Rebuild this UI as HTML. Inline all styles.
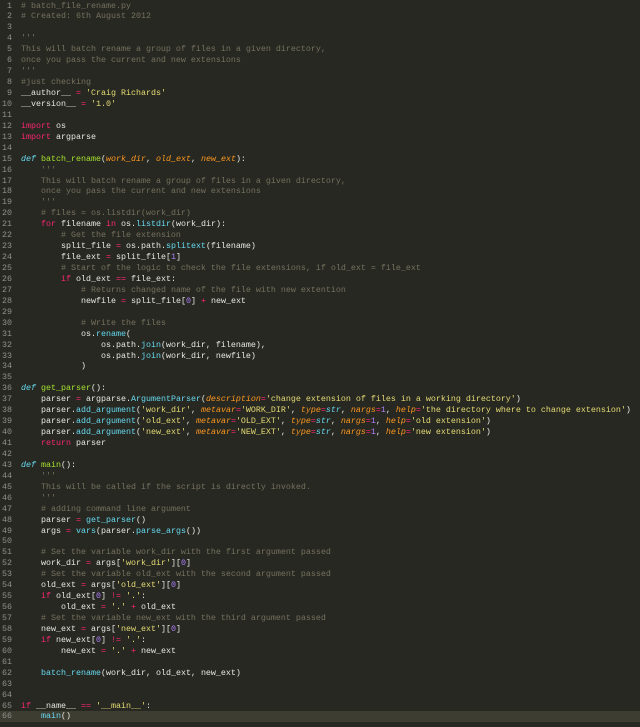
<!DOCTYPE html>
<html><head><meta charset="utf-8"><style>
html,body{margin:0;padding:0;background:#272822;width:640px;height:727px;overflow:hidden}
.w{position:relative;padding-top:0.5px;font-family:"Liberation Mono",monospace;font-size:8.33px;line-height:10.95px;color:#e8e8e2}
.l{display:block;height:10.95px;white-space:pre}
.g{display:inline-block;width:12px;text-align:right;color:#8f908a;margin-right:9px}
.c{color:#75715e}.s{color:#e6db74}.k{color:#f92672}.f{color:#a6e22e}.p{color:#fd971f;font-style:italic}
.d{color:#66d9ef;font-style:italic}.n{color:#ae81ff}.b{color:#66d9ef}
.cur{background:#3e3d32}
</style></head><body><div class="w">
<span class="l"><span class="g">1</span><span class="c"># batch_file_rename.py</span></span>
<span class="l"><span class="g">2</span><span class="c"># Created: 6th August 2012</span></span>
<span class="l"><span class="g">3</span></span>
<span class="l"><span class="g">4</span><span class="c">'''</span></span>
<span class="l"><span class="g">5</span><span class="c">This will batch rename a group of files in a given directory,</span></span>
<span class="l"><span class="g">6</span><span class="c">once you pass the current and new extensions</span></span>
<span class="l"><span class="g">7</span><span class="c">'''</span></span>
<span class="l"><span class="g">8</span><span class="c">#just checking</span></span>
<span class="l"><span class="g">9</span>__author__ <span class="k">=</span> <span class="s">'Craig Richards'</span></span>
<span class="l"><span class="g">10</span>__version__ <span class="k">=</span> <span class="s">'1.0'</span></span>
<span class="l"><span class="g">11</span></span>
<span class="l"><span class="g">12</span><span class="k">import</span> os</span>
<span class="l"><span class="g">13</span><span class="k">import</span> argparse</span>
<span class="l"><span class="g">14</span></span>
<span class="l"><span class="g">15</span><span class="d">def</span> <span class="f">batch_rename</span>(<span class="p">work_dir</span>, <span class="p">old_ext</span>, <span class="p">new_ext</span>):</span>
<span class="l"><span class="g">16</span>    <span class="c">'''</span></span>
<span class="l"><span class="g">17</span>    <span class="c">This will batch rename a group of files in a given directory,</span></span>
<span class="l"><span class="g">18</span>    <span class="c">once you pass the current and new extensions</span></span>
<span class="l"><span class="g">19</span>    <span class="c">'''</span></span>
<span class="l"><span class="g">20</span>    <span class="c"># files = os.listdir(work_dir)</span></span>
<span class="l"><span class="g">21</span>    <span class="k">for</span> filename <span class="k">in</span> os.<span class="b">listdir</span>(work_dir):</span>
<span class="l"><span class="g">22</span>        <span class="c"># Get the file extension</span></span>
<span class="l"><span class="g">23</span>        split_file <span class="k">=</span> os.path.<span class="b">splitext</span>(filename)</span>
<span class="l"><span class="g">24</span>        file_ext <span class="k">=</span> split_file[<span class="n">1</span>]</span>
<span class="l"><span class="g">25</span>        <span class="c"># Start of the logic to check the file extensions, if old_ext = file_ext</span></span>
<span class="l"><span class="g">26</span>        <span class="k">if</span> old_ext <span class="k">==</span> file_ext:</span>
<span class="l"><span class="g">27</span>            <span class="c"># Returns changed name of the file with new extention</span></span>
<span class="l"><span class="g">28</span>            newfile <span class="k">=</span> split_file[<span class="n">0</span>] <span class="k">+</span> new_ext</span>
<span class="l"><span class="g">29</span></span>
<span class="l"><span class="g">30</span>            <span class="c"># Write the files</span></span>
<span class="l"><span class="g">31</span>            os.<span class="b">rename</span>(</span>
<span class="l"><span class="g">32</span>                os.path.<span class="b">join</span>(work_dir, filename),</span>
<span class="l"><span class="g">33</span>                os.path.<span class="b">join</span>(work_dir, newfile)</span>
<span class="l"><span class="g">34</span>            )</span>
<span class="l"><span class="g">35</span></span>
<span class="l"><span class="g">36</span><span class="d">def</span> <span class="f">get_parser</span>():</span>
<span class="l"><span class="g">37</span>    parser <span class="k">=</span> argparse.<span class="b">ArgumentParser</span>(<span class="p">description</span><span class="k">=</span><span class="s">'change extension of files in a working directory'</span>)</span>
<span class="l"><span class="g">38</span>    parser.<span class="b">add_argument</span>(<span class="s">'work_dir'</span>, <span class="p">metavar</span><span class="k">=</span><span class="s">'WORK_DIR'</span>, <span class="p">type</span><span class="k">=</span><span class="d">str</span>, <span class="p">nargs</span><span class="k">=</span><span class="n">1</span>, <span class="p">help</span><span class="k">=</span><span class="s">'the directory where to change extension'</span>)</span>
<span class="l"><span class="g">39</span>    parser.<span class="b">add_argument</span>(<span class="s">'old_ext'</span>, <span class="p">metavar</span><span class="k">=</span><span class="s">'OLD_EXT'</span>, <span class="p">type</span><span class="k">=</span><span class="d">str</span>, <span class="p">nargs</span><span class="k">=</span><span class="n">1</span>, <span class="p">help</span><span class="k">=</span><span class="s">'old extension'</span>)</span>
<span class="l"><span class="g">40</span>    parser.<span class="b">add_argument</span>(<span class="s">'new_ext'</span>, <span class="p">metavar</span><span class="k">=</span><span class="s">'NEW_EXT'</span>, <span class="p">type</span><span class="k">=</span><span class="d">str</span>, <span class="p">nargs</span><span class="k">=</span><span class="n">1</span>, <span class="p">help</span><span class="k">=</span><span class="s">'new extension'</span>)</span>
<span class="l"><span class="g">41</span>    <span class="k">return</span> parser</span>
<span class="l"><span class="g">42</span></span>
<span class="l"><span class="g">43</span><span class="d">def</span> <span class="f">main</span>():</span>
<span class="l"><span class="g">44</span>    <span class="c">'''</span></span>
<span class="l"><span class="g">45</span>    <span class="c">This will be called if the script is directly invoked.</span></span>
<span class="l"><span class="g">46</span>    <span class="c">'''</span></span>
<span class="l"><span class="g">47</span>    <span class="c"># adding command line argument</span></span>
<span class="l"><span class="g">48</span>    parser <span class="k">=</span> <span class="b">get_parser</span>()</span>
<span class="l"><span class="g">49</span>    args <span class="k">=</span> <span class="b">vars</span>(parser.<span class="b">parse_args</span>())</span>
<span class="l"><span class="g">50</span></span>
<span class="l"><span class="g">51</span>    <span class="c"># Set the variable work_dir with the first argument passed</span></span>
<span class="l"><span class="g">52</span>    work_dir <span class="k">=</span> args[<span class="s">'work_dir'</span>][<span class="n">0</span>]</span>
<span class="l"><span class="g">53</span>    <span class="c"># Set the variable old_ext with the second argument passed</span></span>
<span class="l"><span class="g">54</span>    old_ext <span class="k">=</span> args[<span class="s">'old_ext'</span>][<span class="n">0</span>]</span>
<span class="l"><span class="g">55</span>    <span class="k">if</span> old_ext[<span class="n">0</span>] <span class="k">!=</span> <span class="s">'.'</span>:</span>
<span class="l"><span class="g">56</span>        old_ext <span class="k">=</span> <span class="s">'.'</span> <span class="k">+</span> old_ext</span>
<span class="l"><span class="g">57</span>    <span class="c"># Set the variable new_ext with the third argument passed</span></span>
<span class="l"><span class="g">58</span>    new_ext <span class="k">=</span> args[<span class="s">'new_ext'</span>][<span class="n">0</span>]</span>
<span class="l"><span class="g">59</span>    <span class="k">if</span> new_ext[<span class="n">0</span>] <span class="k">!=</span> <span class="s">'.'</span>:</span>
<span class="l"><span class="g">60</span>        new_ext <span class="k">=</span> <span class="s">'.'</span> <span class="k">+</span> new_ext</span>
<span class="l"><span class="g">61</span></span>
<span class="l"><span class="g">62</span>    <span class="b">batch_rename</span>(work_dir, old_ext, new_ext)</span>
<span class="l"><span class="g">63</span></span>
<span class="l"><span class="g">64</span></span>
<span class="l"><span class="g">65</span><span class="k">if</span> __name__ <span class="k">==</span> <span class="s">'__main__'</span>:</span>
<span class="l cur"><span class="g">66</span>    <span class="b">main</span>()</span>
</div></body></html>
